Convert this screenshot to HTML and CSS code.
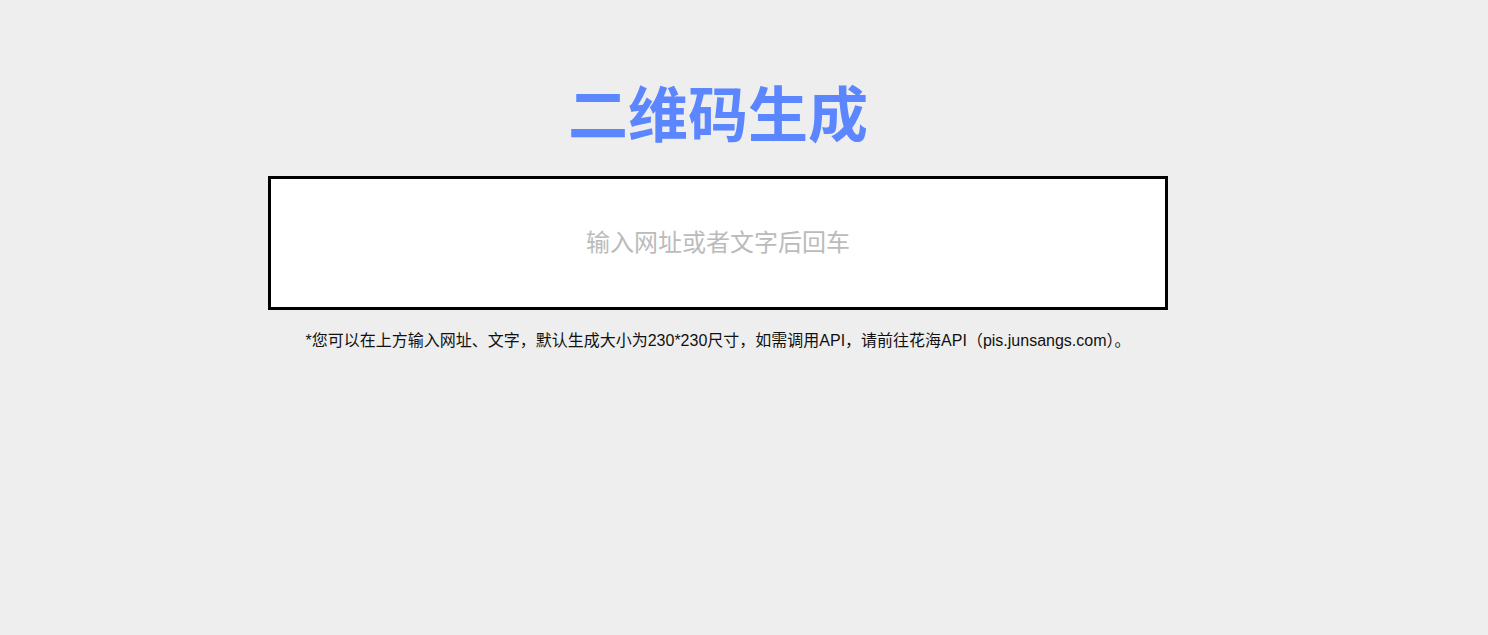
FILE: index.html
```html
<!DOCTYPE html>
<html lang="zh-CN">
<head>
<meta charset="UTF-8">
<meta name="viewport" content="width=device-width, initial-scale=1.0">
<title>二维码生成</title>
<link rel="stylesheet" href="styles.css">
</head>
<body>

<div class="wrap">
    <h1 class="title">二维码生成</h1>
    <input type="text" class="qr-input" placeholder="输入网址或者文字后回车">
    <p class="tip">*您可以在上方输入网址、文字，默认生成大小为230*230尺寸，如需调用API，请前往花海API（pis.junsangs.com）。</p>
</div>

</body>
</html>
```

FILE: styles.css
```css
body {
    margin: 0;
    padding: 0;
    background-color: #eeeeee;
    font-family: "Liberation Sans", Arial, "Noto Sans CJK SC", sans-serif;
}

.wrap {
    width: 900px;
    margin-left: 268px;
    padding-top: 73px;
    display: flex;
    flex-direction: column;
    align-items: center;
}

.title {
    margin: 0;
    font-size: 60px;
    line-height: 76px;
    font-weight: bold;
    color: #5b86ff;
    font-family: "Noto Sans CJK SC", sans-serif;
}

.qr-input {
    box-sizing: border-box;
    width: 900px;
    height: 134px;
    margin-top: 27px;
    border: 3px solid #000;
    background: #fff;
    outline: none;
    text-align: center;
    font-size: 24px;
    font-family: "Liberation Sans", Arial, "Noto Sans CJK SC", sans-serif;
}

.qr-input::placeholder {
    color: #bbbbbb;
}

.tip {
    margin: 20px 0 0;
    font-size: 16px;
    line-height: 22px;
    color: #111;
}
```
